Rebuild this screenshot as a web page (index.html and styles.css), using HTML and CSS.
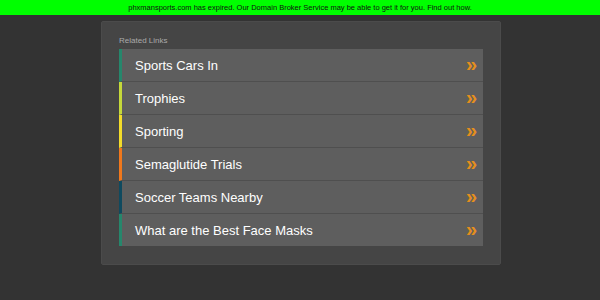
FILE: index.html
```html
<!DOCTYPE html>
<html lang="en">
  <head>
    <meta charset="UTF-8" />
    <meta name="viewport" content="width=device-width, initial-scale=1.0" />
    <title>phxmansports.com</title>
    <link rel="stylesheet" href="styles.css">
  </head>
  <body>
    <!-- Expiry notice -->
    <div class="notice">
      phxmansports.com has expired. Our Domain Broker Service may be able to get it for you. <a href="#">Find out how.</a>
    </div>

    <div class="content">
      <div class="links-box">
        <div class="links-title">Related Links</div>
        <ul class="links">
          <li class="link c1"><a href="#"><span class="link-text">Sports Cars In</span><span class="arrow">&raquo;</span></a></li>
          <li class="link c2"><a href="#"><span class="link-text">Trophies</span><span class="arrow">&raquo;</span></a></li>
          <li class="link c3"><a href="#"><span class="link-text">Sporting</span><span class="arrow">&raquo;</span></a></li>
          <li class="link c4"><a href="#"><span class="link-text">Semaglutide Trials</span><span class="arrow">&raquo;</span></a></li>
          <li class="link c5"><a href="#"><span class="link-text">Soccer Teams Nearby</span><span class="arrow">&raquo;</span></a></li>
          <li class="link c1"><a href="#"><span class="link-text">What are the Best Face Masks</span><span class="arrow">&raquo;</span></a></li>
        </ul>
      </div>
    </div>
  </body>
</html>
```

FILE: styles.css
```css
body {
  font-family: "Liberation Sans", Arial, sans-serif;
  background-color: #333333;
  margin: 0;
  padding: 0;
}

.notice {
  background-color: #00ff00;
  color: #111;
  font-size: 7.5px;
  height: 15px;
  line-height: 15px;
  text-align: center;
}

.notice a {
  color: #111;
  text-decoration: none;
}

.content {
  display: flex;
  justify-content: center;
  padding-top: 6px;
  padding-left: 2px;
}

.links-box {
  background-color: #454545;
  border: 1px solid #4b4b4b;
  border-radius: 2px;
  width: 364px;
  padding: 12px 17px 18px 17px;
}

.links-title {
  font-size: 8px;
  color: #aaaaaa;
  height: 15px;
  line-height: 14px;
}

.links {
  list-style: none;
  margin: 0;
  padding: 0;
  display: flex;
  flex-direction: column;
}

.link {
  border-left: 3px solid #26876c;
  border-bottom: 1px solid #4f4f4f;
  background-color: #5e5e5e;
}

.link:last-child {
  border-bottom: none;
}

.link a {
  display: flex;
  justify-content: space-between;
  align-items: center;
  height: 32px;
  padding: 0 6px 0 13px;
  text-decoration: none;
}

.link-text {
  font-size: 13px;
  color: #ffffff;
}

.arrow {
  font-size: 20px;
  font-weight: bold;
  color: #e58f1c;
  line-height: 1;
  margin-top: -2px;
}

.c1 { border-left-color: #26876c; }
.c2 { border-left-color: #c5d83a; }
.c3 { border-left-color: #f3dc2a; }
.c4 { border-left-color: #f0781c; }
.c5 { border-left-color: #0f4a5f; }
```
